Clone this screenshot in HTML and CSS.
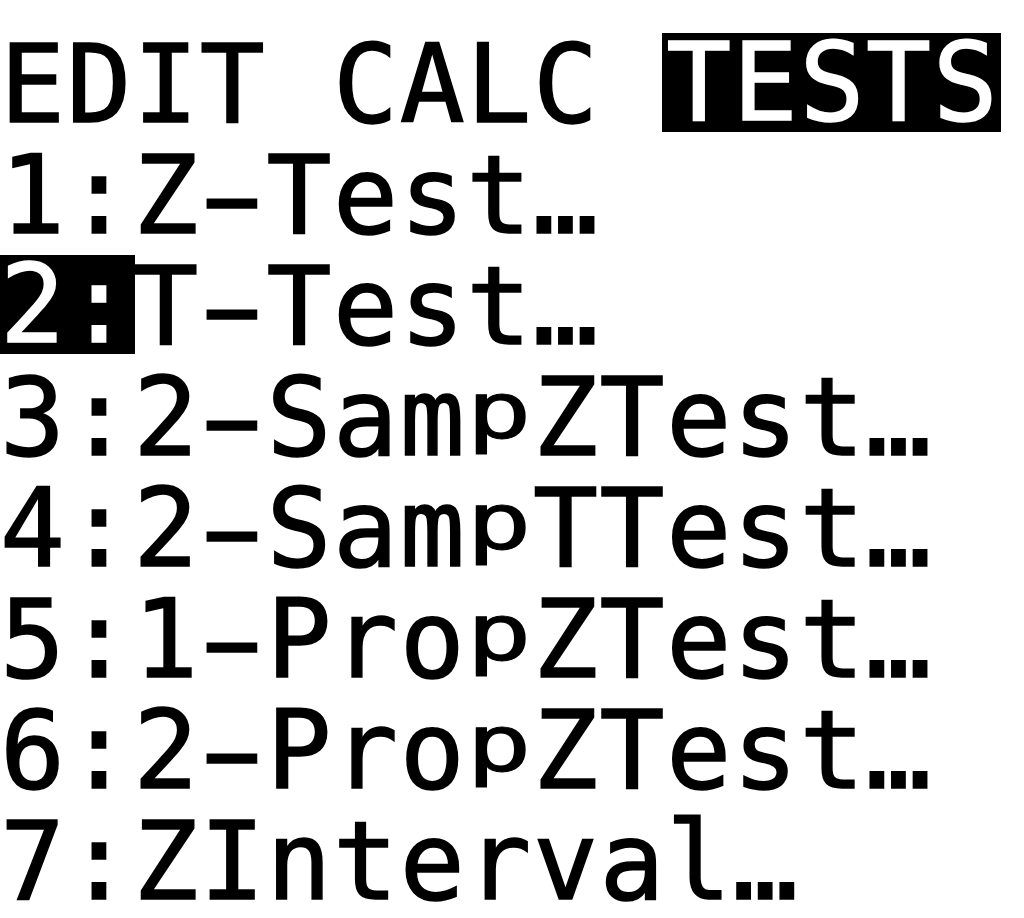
FILE: index.html
```html
<!DOCTYPE html>
<html lang="en">
<head>
    <meta charset="UTF-8">
    <meta name="viewport" content="width=device-width, initial-scale=1.0">
    <title>TESTS</title>
    <link rel="stylesheet" href="styles.css">
</head>
<body>
    <div class='screen'>
        <div class='row'>EDIT CALC <span class='sel'>TESTS</span></div>
        <div class='row'>1:Z<span class='dash'>-</span>Test…</div>
        <div class='row'><span class='sel'>2:</span>T<span class='dash'>-</span>Test…</div>
        <div class='row'>3:2<span class='dash'>-</span>Sam<span class='p'>p</span>ZTest…</div>
        <div class='row'>4:2<span class='dash'>-</span>Sam<span class='p'>p</span>TTest…</div>
        <div class='row'>5:1<span class='dash'>-</span>Pro<span class='p'>p</span>ZTest…</div>
        <div class='row'>6:2<span class='dash'>-</span>Pro<span class='p'>p</span>ZTest…</div>
        <div class='row'>7:ZInterval…</div>
    </div>
</body>
</html>
```

FILE: styles.css
```css
html, body {
    margin: 0;
    padding: 0;
    background: #fff;
}
.screen {
    width: 1024px;
    height: 918px;
    overflow: hidden;
    padding-top: 29px;
    box-sizing: border-box;
    font-family: "DejaVu Sans Mono", "Liberation Mono", monospace;
    font-size: 108px;
    letter-spacing: 1.6px;
    line-height: 111px;
    color: #000;
    -webkit-text-stroke: 1.5px #000;
}
.row {
    white-space: pre;
    height: 111px;
}
.sel {
    display: inline-block;
    line-height: 99px;
    vertical-align: 2px;
    background: #000;
    color: #fff;
    -webkit-text-stroke: 1.5px #fff;
    box-shadow: 2px 0 0 #000, -4px 0 0 #000;
}
/* the calculator's p sits on the baseline like a small capital */
.p {
    display: inline-block;
    transform: scaleY(0.72);
    transform-origin: 50% 34px;
}
/* long minus-like dash of the calculator font */
.dash {
    display: inline-block;
    transform: scaleX(1.75);
}
```
